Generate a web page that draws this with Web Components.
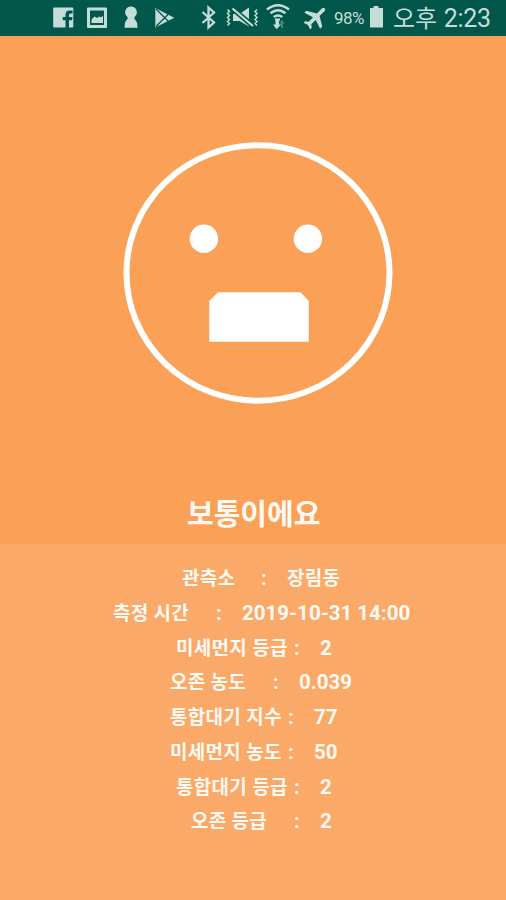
<!DOCTYPE html>
<html lang="ko">
<head>
<meta charset="utf-8">
<title>대기 정보</title>
<style>
html,body{margin:0;padding:0;background:#faa968}
body{font-family:Roboto,"Noto Sans CJK KR",sans-serif}
</style>
</head>
<body>
<air-app></air-app>
<script>
class StatusBar extends HTMLElement{
  constructor(){
    super();
    this.attachShadow({mode:'open'}).innerHTML=`
<style>
:host{display:flex;height:35.5px;background:#015749;color:#c5ddd8;box-sizing:border-box}
svg{display:block;height:35px;flex:none;fill:currentColor}
span{white-space:pre;line-height:36px;flex:none}
.pct{width:33px;font-size:17px;letter-spacing:-.6px;height:35px}
.ampm{font-size:24px;width:45px;padding:1px 0 0 8px;height:34px}
.time{font-size:25px;letter-spacing:-.35px;padding-top:1px;height:34px}
</style>
<svg width="334" viewBox="0 0 334 35">
 <path fill-rule="evenodd" d="M54 7.5h18.5q.8 0 .8.8v18.4q0 .8-.8.8H69v-7.3h3l.5-3.2H69v-2q0-1.600 1.800-1.600h1.800v-3h-2.800q-4.300 0-4.300 4.400V17h-2.800v3.200h2.800v7.300H54q-.8 0-.8-.8V8.300q0-.8.8-.8z"/>
 <path fill-rule="evenodd" d="M88 7.500h18q1 0 1 1v18.500q0 1-1 1H88q-1 0-1-1V8.500q0-1 1-1zM90 10.500v14.500h14V10.500z"/>
 <path d="M91.500 23v-3.500l3-3 2.500 1.500 2.500-1.500 1.500 1 2-2V23z"/>
 <path d="M131 6.500a5.800 5.800 0 0 1 3.800 10.200l-.6 1.500 2.800 4.200.5 5.400h-13l.5-5.400 2.800-4.200-.6-1.500A5.800 5.800 0 0 1 131 6.500z"/>
 <path d="M155.300 8v19.500l19-9.700z"/>
 <path d="M156 9l12.500 12.500M156 26.500l12.500-12.500" stroke="#015749" stroke-width="1.300" fill="none"/>
 <path d="M202.500 12l11.500 10.500-5.500 5V7.500l5.500 5L202.500 23" stroke="currentColor" stroke-width="2.300" fill="none"/>
 <path d="M227.500 9.500l2 2-2 2 2 2-2 2 2 2-2 2 2 2-2 2M257 9.500l-2 2 2 2-2 2 2 2-2 2 2 2-2 2 2 2" stroke="currentColor" stroke-width="1.500" fill="none"/>
 <path d="M233 14h6.500l9.500-6.500v19L239.500 21H233z"/>
 <path d="M232.500 8.500l21 18" stroke="#015749" stroke-width="5"/>
 <path d="M232.500 8.500l20.500 17.500" stroke="currentColor" stroke-width="2.200"/>
 <path d="M267 9.500q11-8.500 22 0M270.500 13.300q7.500-6 15 0M273.800 17q4.200-3 8.400 0" stroke="currentColor" stroke-width="2.400" fill="none"/>
 <path d="M275 18.500h5v2h-1v4h2.200L276.500 29.300 273 24.500h2.500v-4H275z"/>
 <path opacity=".35" d="M282 20l3 3.500h-2V28h-2v-4.500h-2z"/>
 <g transform="translate(316 17) rotate(45) scale(1.180)"><path d="M-1.600-8.500q0-2 1.600-2t1.600 2v5.800L9.500 2v2.500L1.600 2v5.200l2.400 1.800v1.900l-4-1.200-4 1.200V9l2.400-1.800V2L-9.500 4.500V2l7.900-4.700z"/></g>
</svg>
<span class="pct">98%</span>
<svg width="18" viewBox="367 0 18 35"><path d="M370 8h3.500V6h5v2h4.500v19.500H370z"/></svg>
<span class="ampm">오후</span>
<span class="time"> 2:23</span>`;
  }
}
class MoodFace extends HTMLElement{
  constructor(){
    super();
    this.attachShadow({mode:'open'}).innerHTML=`
<style>:host{display:block;height:450px}svg{display:block}</style>
<svg width="506" height="450" viewBox="0 36 506 450">
 <ellipse cx="258" cy="273" rx="131.500" ry="127.700" fill="none" stroke="#fff" stroke-width="6"/>
 <circle cx="203.900" cy="238.800" r="14.200" fill="#fff"/><circle cx="307.900" cy="238.800" r="14.200" fill="#fff"/>
 <path fill="#fff" d="M209.300 301L218 292.300h82.500l8.300 8.700v40.700h-99.500z"/>
</svg>`;
  }
}
class AirReading extends HTMLElement{
  constructor(){
    super();
    this.attachShadow({mode:'open'}).innerHTML=`
<style>
:host{display:flex;height:34.750px;line-height:34.750px;padding-left:${this.getAttribute('indent')}px;
 color:#fffaf3;font-size:19px;font-weight:700;white-space:pre}
.l{width:${this.getAttribute('label-width')}px;letter-spacing:.3px;padding-top:1px;height:33.750px}
.c{width:26px;font-size:20px}
.v{font-size:20.500px}
:host([hangul]) .v{font-size:19px;letter-spacing:.3px;padding-top:1px;height:33.750px}
</style><span class="l"><slot></slot></span><span class="c">:</span><span class="v"><slot name="value"></slot></span>`;
  }
}
class AirApp extends HTMLElement{
  constructor(){
    super();
    const rows=[
      ['관측소','장림동',182,79],['측정 시간','2019-10-31 14:00',113,103],
      ['미세먼지 등급','2',176,118],['오존 농도','0.039',170,103],
      ['통합대기 지수','77',170,118],['미세먼지 농도','50',170,118],
      ['통합대기 등급','2',176,118],['오존 등급','2',191,103]];
    this.attachShadow({mode:'open'}).innerHTML=`
<style>
:host{display:flex;flex-direction:column;width:506px;height:900px;overflow:hidden;background:#faa968}
section{height:508.500px;background:#fba157}
h1{margin:0;height:58px;line-height:58px;font-size:29px;font-weight:700;color:#fffaf3;padding-left:187px;white-space:pre}
main{padding-top:17px}
</style>
<status-bar></status-bar>
<section><mood-face></mood-face><h1>보통이에요</h1></section>
<main>${rows.map(([l,v,i,w])=>`<air-reading indent="${i}" label-width="${w}"${/^\d/.test(v)?'':' hangul'}>${l}<span slot="value">${v}</span></air-reading>`).join('')}</main>`;
  }
}
customElements.define('status-bar',StatusBar);
customElements.define('mood-face',MoodFace);
customElements.define('air-reading',AirReading);
customElements.define('air-app',AirApp);
</script>
</body>
</html>
